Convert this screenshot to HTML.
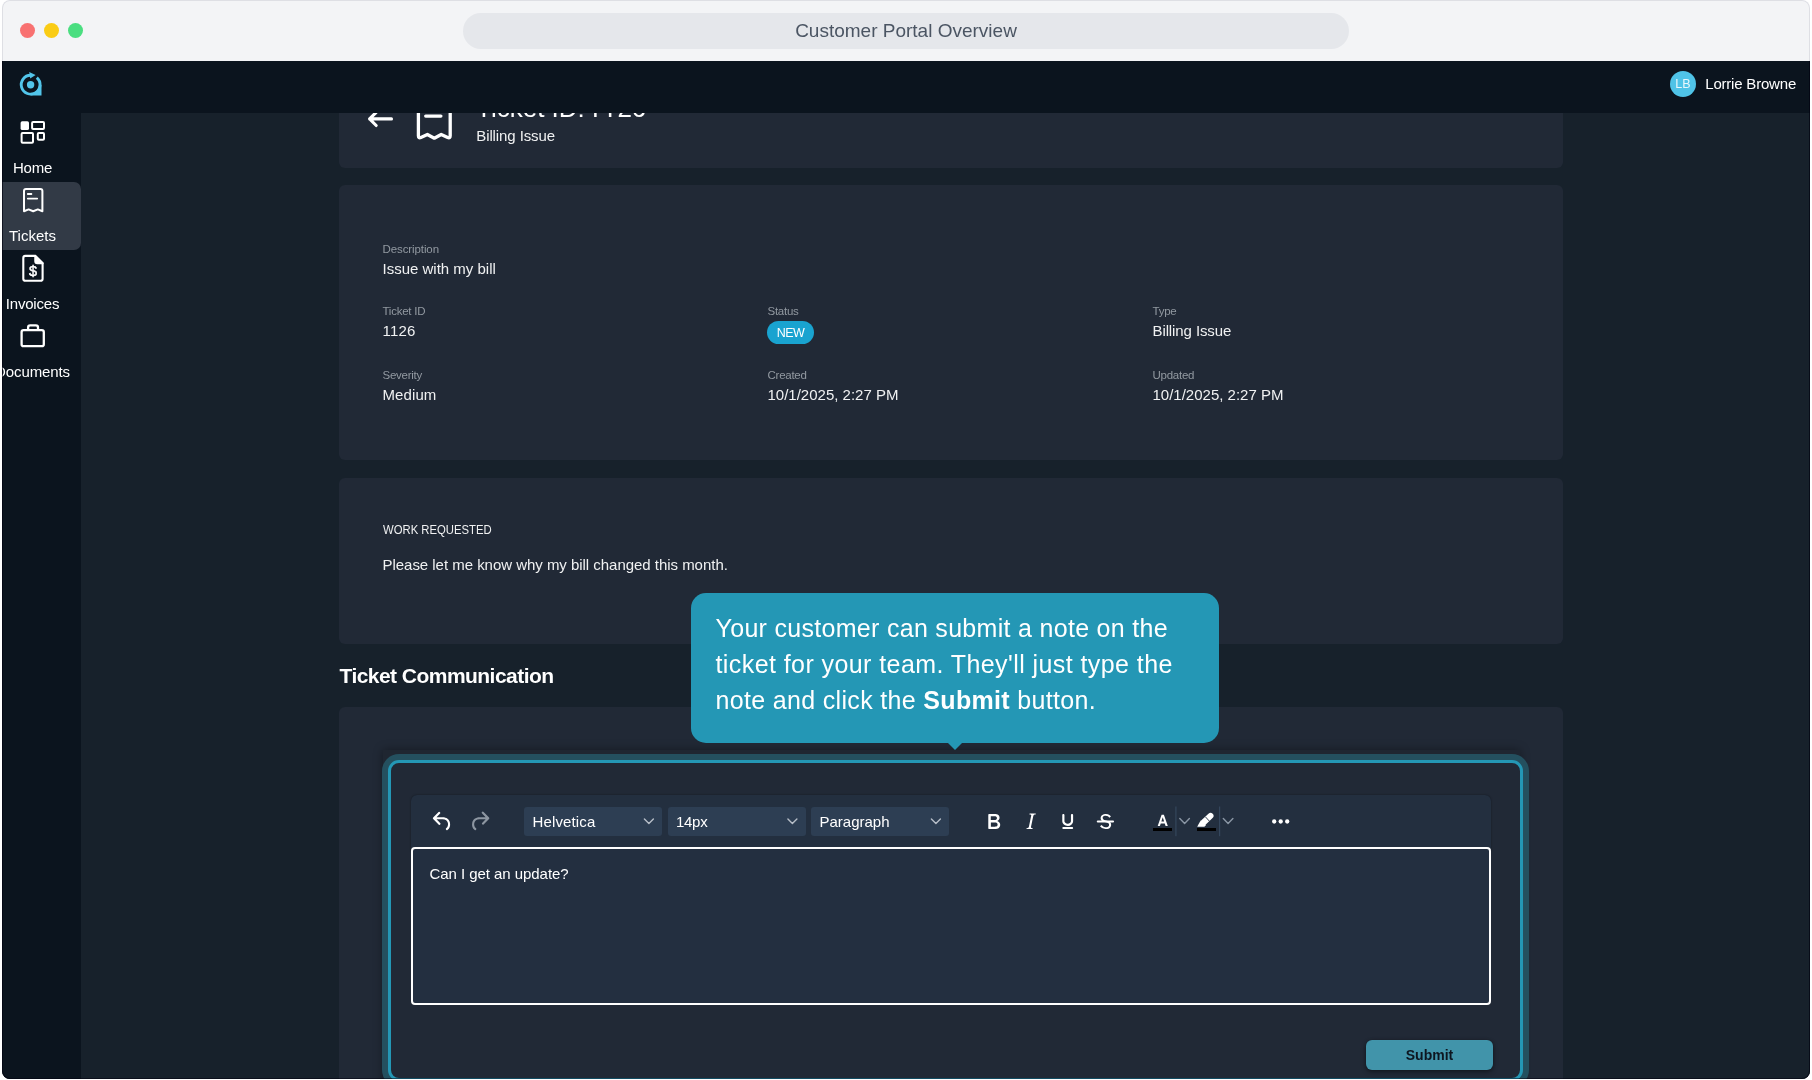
<!DOCTYPE html>
<html>
<head>
<meta charset="utf-8">
<title>Customer Portal Overview</title>
<style>
*{box-sizing:border-box;margin:0;padding:0}
html,body{width:1812px;height:1080px;overflow:hidden;background:#fff;font-family:"Liberation Sans",sans-serif;}
.abs{position:absolute}
.t{position:absolute;white-space:nowrap;line-height:1}
#win{position:absolute;left:1.5px;top:0;width:1808.7px;height:1078.7px;border-radius:8px;overflow:hidden;background:linear-gradient(#f3f4f6 0,#f3f4f6 60px,#0b141e 60px,#0b141e 100%)}
#win:before,#win:after{content:"";position:absolute;left:0;top:0;right:0;bottom:0;border-radius:8px;z-index:20;pointer-events:none}
#win:before{box-shadow:inset 0 0 0 1px rgba(10,10,50,.09)}
#win:after{box-shadow:inset 0 0 0 1px rgba(0,0,12,.6);clip-path:inset(61px 0 0 0)}
#pg{position:absolute;left:-1.5px;top:0;width:1812px;height:1080px;will-change:transform}
#titlebar{position:absolute;left:0;top:0;width:1812px;height:61px;background:#f3f4f6}
.dot{position:absolute;top:23px;width:15px;height:15px;border-radius:50%}
#pill{position:absolute;left:463px;top:13px;width:886px;height:36px;border-radius:18px;background:#e5e7eb}
#main{position:absolute;left:81px;top:113px;width:1731px;height:967px;background:#17212b}
#apphead{position:absolute;left:0;top:61px;width:1812px;height:52.4px;background:#0b141e}
#side{position:absolute;left:0;top:113px;width:81px;height:967px;background:#0b141e}
.card{position:absolute;left:339px;width:1224px;background:#212936;border-radius:6px}
.lbl{color:#9299a1;font-size:11.5px;letter-spacing:-.25px}
.val{color:#f0f1f2;font-size:15px}
.navt{color:#fff;font-size:15px;text-align:center;width:120px;left:-27.5px}
svg{position:absolute;overflow:visible}
</style>
</head>
<body>
<div id="win"><div id="pg">
  <div id="main"></div>

  <!-- card 1 (clipped by header) -->
  <div class="card" style="top:70px;height:97.5px"></div>
  <div class="t" style="left:476px;top:95.2px;font-size:26px;color:#fff">Ticket ID:</div>
  <div class="t" style="left:591.7px;top:95.2px;font-size:26px;color:#fff">I</div>
  <div class="t" style="left:606.4px;top:95.2px;font-size:26px;color:#fff">I</div>
  <div class="t" style="left:617.6px;top:95.2px;font-size:26px;color:#fff;letter-spacing:-.6px">26</div>
  <div class="t val" style="left:476.25px;top:128px;letter-spacing:-0.1px">Billing Issue</div>


  <svg style="left:0;top:0" width="1812" height="200" viewBox="0 0 1812 200" fill="none" stroke="#fff" stroke-linecap="round" stroke-linejoin="round">
    <path d="M391.500 118.900 H369.600 M376.200 112.300 L369.600 118.900 L376.200 125.500" stroke-width="3.100"/>
    <path d="M418.400 100 V135.800 Q418.400 138.600 420.900 137.500 L427.400 134.500 L434.300 138.200 L441.200 134.500 L447.700 137.500 Q450.200 138.600 450.200 135.800 V100" stroke-width="3.300"/>
    <path d="M425.700 116.100 H440.900" stroke-width="3.300"/>
  </svg>
  <!-- card 2 -->
  <div class="card" style="top:185px;height:275px"></div>
  <div class="t lbl" style="left:382.5px;top:243.5px;letter-spacing:-.1px">Description</div>
  <div class="t val" style="left:382.5px;top:261px">Issue with my bill</div>
  <div class="t lbl" style="left:382.5px;top:305.5px">Ticket ID</div>
  <div class="t val" style="left:382.5px;top:323px;letter-spacing:.2px">1126</div>
  <div class="t lbl" style="left:382.5px;top:369.5px">Severity</div>
  <div class="t val" style="left:382.5px;top:387px;letter-spacing:.1px">Medium</div>

  <div class="t lbl" style="left:767.5px;top:305.5px">Status</div>
  <div class="abs" style="left:767px;top:321px;width:47px;height:23px;border-radius:12px;background:#19a3d0"></div>
  <div class="t" style="left:767px;width:47px;text-align:center;top:326.6px;font-size:12.5px;letter-spacing:-.6px;color:#fff">NEW</div>
  <div class="t lbl" style="left:767.5px;top:369.5px">Created</div>
  <div class="t val" style="left:767.5px;top:387px">10/1/2025, 2:27 PM</div>

  <div class="t lbl" style="left:1152.5px;top:305.5px">Type</div>
  <div class="t val" style="left:1152.5px;top:323px;letter-spacing:-.1px">Billing Issue</div>
  <div class="t lbl" style="left:1152.5px;top:369.5px">Updated</div>
  <div class="t val" style="left:1152.5px;top:387px">10/1/2025, 2:27 PM</div>

  <!-- card 3 -->
  <div class="card" style="top:477.5px;height:166px"></div>
  <div class="t" style="left:382.5px;top:522.5px;font-size:13px;color:#f0f1f2;transform:scaleX(.87);transform-origin:0 0">WORK REQUESTED</div>
  <div class="t val" style="left:382.5px;top:557px;letter-spacing:-.03px">Please let me know why my bill changed this month.</div>

  <div class="t" style="left:339.5px;top:664.5px;font-size:21px;font-weight:700;letter-spacing:-.54px;color:#fff">Ticket Communication</div>

  <!-- card 4 -->
  <div class="card" style="top:707px;height:400px"></div>
  <!-- highlight -->
  <div class="abs" style="left:383px;top:750px;width:1137px;height:340px;background:#1f2631;box-shadow:0 0 9px rgba(0,0,0,.38)"></div>
  <div class="abs" style="left:388px;top:760px;width:1134.5px;height:321px;border:3px solid #2497b5;border-radius:11px;box-shadow:0 0 0 6px #24505f;background:#212936"></div>

  <!-- editor -->
  <div class="abs" style="left:411px;top:795px;width:1080px;height:56px;background:#232f3f;border-radius:6px 6px 0 0;box-shadow:0 0 2px rgba(0,0,0,.45)"></div>
  <div class="abs" style="left:411px;top:847px;width:1080px;height:158px;background:#232f40;border:2px solid #fff;border-radius:4px"></div>
  <div class="t" style="left:429.5px;top:866px;font-size:15px;color:#fff;letter-spacing:-.05px">Can I get an update?</div>

  <div class="abs sel" style="left:524px;top:807px;width:138px;height:29px;background:#2d3e53;border-radius:3px"></div>
  <div class="abs sel" style="left:667.5px;top:807px;width:138px;height:29px;background:#2d3e53;border-radius:3px"></div>
  <div class="abs sel" style="left:811px;top:807px;width:138px;height:29px;background:#2d3e53;border-radius:3px"></div>
  <div class="t" style="left:532.5px;top:814px;font-size:15px;color:#fff;letter-spacing:.14px">Helvetica</div>
  <div class="t" style="left:676px;top:814px;font-size:15px;color:#fff;letter-spacing:-.28px">14px</div>
  <div class="t" style="left:819.5px;top:814px;font-size:15px;color:#fff">Paragraph</div>


  <!-- toolbar icons -->
  <svg style="left:0;top:790px" width="1812" height="70" viewBox="0 790 1812 70" fill="none">
    <!-- undo / redo -->
    <g transform="translate(429.6 808.5) scale(1.083)" fill="#fff"><path d="M6.4 8H12c3.700 0 6.200 2 6.800 5.100.6 2.700-.4 5.600-2.300 6.800a1 1 0 0 1-1-1.800c1.100-.6 1.800-2.700 1.400-4.600-.5-2.100-2.100-3.500-4.900-3.500H6.400l3.300 3.300a1 1 0 1 1-1.400 1.400l-5-5a1 1 0 0 1 0-1.400l5-5a1 1 0 0 1 1.400 1.400L6.400 8z"/></g>
    <g transform="translate(466.6 808.5) scale(1.083)" fill="#8d96a1"><path d="M17.600 10H12c-2.800 0-4.400 1.400-4.900 3.500-.4 2 .3 4 1.400 4.600a1 1 0 1 1-1 1.800c-2-1.200-2.900-4.100-2.300-6.800.6-3 3-5.100 6.800-5.100h5.600l-3.300-3.300a1 1 0 1 1 1.400-1.400l5 5a1 1 0 0 1 0 1.400l-5 5a1 1 0 0 1-1.400-1.400l3.300-3.300z"/></g>
    <!-- select chevrons -->
    <g stroke="#b6bdc7" stroke-width="1.4" stroke-linecap="round" stroke-linejoin="round">
      <path d="M644.400 819 L648.900 823.500 L653.400 819"/>
      <path d="M787.900 819 L792.400 823.500 L796.900 819"/>
      <path d="M931.400 819 L935.900 823.500 L940.400 819"/>
    </g>
    <!-- B I U S -->
    <g transform="translate(980.700 808.500) scale(1.083)" fill="#fff"><path d="M7.800 19c-.3 0-.5 0-.6-.2l-.2-.5V5.700c0-.2 0-.4.200-.5l.6-.2h5c1.500 0 2.700.3 3.500 1 .7.600 1.100 1.400 1.100 2.500a3 3 0 0 1-.6 1.900c-.4.6-1 1-1.600 1.200.4.100.900.3 1.300.600s.800.700 1 1.200c.4.400.5 1 .5 1.600 0 1.300-.4 2.300-1.300 3-.800.700-2.100 1-3.800 1H7.800zm5-8.300c.6 0 1.200-.1 1.600-.5.400-.3.600-.7.600-1.300 0-1.100-.800-1.700-2.300-1.700H9.300v3.500h3.400zm.5 6c.7 0 1.300-.1 1.700-.4.400-.4.600-.9.600-1.500s-.2-1-.7-1.400c-.4-.3-1-.4-2-.4H9.400v3.800h4z"/></g>
    <g transform="translate(1017.700 808.500) scale(1.083)" fill="#fff"><path d="M16.700 4.700l-.1.900h-.3c-.6 0-1 0-1.400.3-.3.300-.4.600-.5 1.100l-2.100 9.800v.6c0 .5.400.8 1.400.8h.2l-.2.800H8l.2-.8h.2c1.100 0 1.800-.5 2-1.500l2-9.800.1-.5c0-.6-.4-.8-1.400-.8h-.3l.2-.9h5.800z"/></g>
    <g transform="translate(1054.700 808.500) scale(1.083)" fill="#fff"><path d="M16 5c.6 0 1 .4 1 1v5.500a4 4 0 0 1-.4 1.800l-1 1.400a5.300 5.300 0 0 1-5.500 1 5 5 0 0 1-1.600-1c-.5-.4-.8-.9-1.100-1.400a4 4 0 0 1-.4-1.800V6c0-.6.400-1 1-1s1 .4 1 1v5.500c0 .3 0 .6.200 1l.6.700a3.300 3.300 0 0 0 2.200.8 3.400 3.400 0 0 0 2.200-.8c.3-.2.400-.5.600-.8l.2-.9V6c0-.6.400-1 1-1zM8 17h8c.6 0 1 .4 1 1s-.4 1-1 1H8a1 1 0 0 1 0-2z"/></g>
    <g transform="translate(1092.400 808.500) scale(1.083)" fill="#fff"><path d="M15.600 8.500c-.5-.7-1-1.100-1.300-1.300-.6-.4-1.300-.6-2-.6-2.700 0-2.800 1.700-2.800 2.100 0 1.600 1.800 2 3.200 2.300 4.400.9 4.600 2.800 4.600 3.900 0 1.400-.7 4.100-5 4.100A6.200 6.200 0 0 1 7 16.400l1.500-1.100c.4.600 1.600 2 3.700 2 1.600 0 2.500-.4 3-1.200.4-.8.300-2-.8-2.600-.7-.4-1.600-.7-2.900-1-1-.2-3.900-.8-3.900-3.600C7.600 6 10.300 5 12.400 5c2.900 0 4.200 1.600 4.700 2.400l-1.500 1.100z"/><path d="M5 11h14a1 1 0 0 1 0 2H5a1 1 0 0 1 0-2z"/></g>
    <!-- text color -->
    <path transform="translate(1157.700 814.800)" fill="#fff" fill-rule="evenodd" d="M0 11.200 L3.900 0 L6.200 0 L10.100 11.200 L7.900 11.200 L7.050 8.600 L3.050 8.600 L2.200 11.200Z M3.650 6.800 L6.450 6.800 L5.050 2.400Z"/>
    <rect x="1153" y="828" width="19" height="3" fill="#000"/>
    <rect x="1175.300" y="806.500" width="1.200" height="29.700" fill="#34465c"/>
    <path d="M1179.800 818.600 L1184.600 823.600 L1189.400 818.600" stroke="#8a96a4" stroke-width="1.400" stroke-linecap="round" stroke-linejoin="round"/>
    <!-- highlighter -->
    <path d="M1197.200 826.800 L1200.200 821.200 L1205.600 825.500 L1204.400 826.800Z" fill="#fff"/>
    <path d="M1203.200 822.800 L1210.500 815.900" stroke="#fff" stroke-width="6" stroke-linecap="round"/>
    <path d="M1200.600 821.100 L1205.800 825.300" stroke="#fff" stroke-width="1"/>
    <path d="M1205.300 816.700 L1209.700 821.500" stroke="#232f3f" stroke-width=".9"/>
    <rect x="1197" y="828" width="19" height="3" fill="#000"/>
    <rect x="1219" y="806.500" width="1.200" height="29.700" fill="#34465c"/>
    <path d="M1223.300 818.600 L1228.100 823.600 L1232.900 818.600" stroke="#8a96a4" stroke-width="1.400" stroke-linecap="round" stroke-linejoin="round"/>
    <!-- more -->
    <g fill="#fff"><circle cx="1274.200" cy="821.500" r="2.150"/><circle cx="1280.700" cy="821.500" r="2.150"/><circle cx="1287.200" cy="821.500" r="2.150"/></g>
  </svg>
  <!-- submit -->
  <div class="abs" style="left:1366px;top:1040.2px;width:127px;height:29.6px;background:#4194aa;border-radius:6px;box-shadow:0 2px 5px rgba(0,0,0,.4),0 0 3px rgba(0,0,0,.2)"></div>
  <div class="t" style="left:1366px;width:127px;text-align:center;top:1048px;font-size:14px;font-weight:700;color:#0d1620">Submit</div>

  <!-- tooltip -->
  <div class="abs" style="left:691px;top:593.2px;width:528px;height:149.8px;background:#2497b5;border-radius:15px"></div>
  <div class="abs" style="left:947px;top:742px;width:0;height:0;border-left:8px solid transparent;border-right:8px solid transparent;border-top:8px solid #2497b5"></div>
  <div class="t tip" style="left:715.5px;top:616px;font-size:25px;letter-spacing:.3px;color:#fff">Your customer can submit a note on the</div>
  <div class="t tip" style="left:715.5px;top:652px;font-size:25px;letter-spacing:.42px;color:#fff">ticket for your team. They'll just type the</div>
  <div class="t tip" style="left:715.5px;top:688px;font-size:25px;letter-spacing:.33px;color:#fff">note and click the <b>Submit</b> button.</div>

  <!-- app header + sidebar on top -->
  <div id="apphead">
    <div class="abs" style="left:1670px;top:10px;width:26px;height:26px;border-radius:50%;background:#4fc3e7"></div>
    <div class="t" style="left:1670px;width:26px;text-align:center;top:16.5px;font-size:12.5px;color:#e9f7fc">LB</div>
    <div class="t" style="left:1705.25px;top:15px;font-size:15px;color:#fff;letter-spacing:-.2px">Lorrie Browne</div>
  </div>
  <div id="side">
    <div class="abs" style="left:0;top:69px;width:81px;height:68px;background:#323a46;border-radius:0 7px 7px 0"></div>

    <!-- sidebar icons (page coords via svg offset) -->
    <svg style="left:0;top:-52px" width="81" height="450" viewBox="0 61 81 450" fill="none">
      <!-- logo -->
      <g fill="#52c5ea" stroke="none">
        <path d="M30.6 95.6 H41.5 V84.7 H39 A8.4 8.4 0 0 1 30.6 93.1Z"/>
        <circle cx="30.6" cy="84.7" r="3.7"/>
        <path d="M29.2 71.9 L35.6 75 L30.2 78.6Z"/>
      </g>
      <path d="M36.800 77.600 A9.400 9.400 0 1 1 30.600 75.300" stroke="#52c5ea" stroke-width="2.900"/>
      <!-- home -->
      <rect x="20.6" y="121.3" width="8.4" height="8.7" rx="1.6" fill="#fff"/>
      <g stroke="#fff" stroke-width="2">
        <rect x="32.1" y="122.1" width="11.9" height="6.9" rx="1"/>
        <rect x="21.6" y="133.1" width="11.4" height="9.7" rx="1"/>
        <rect x="37.8" y="133.1" width="6.2" height="6.6" rx="1"/>
      </g>
      <!-- tickets -->
      <g stroke="#fff" stroke-width="2" stroke-linejoin="round" stroke-linecap="round">
        <path d="M24 211.2 V191 Q24 189 26 189 H40.4 Q42.4 189 42.4 191 V211.2 L37.8 209.4 L33.2 211.2 L28.6 209.4Z"/>
        <path d="M27.8 194 H31.4 M27.8 198.6 H37.2" stroke-width="1.8"/>
      </g>
      <!-- invoices -->
      <g stroke="#fff" stroke-width="2.1" stroke-linejoin="round">
        <path d="M35.3 255.9 H25.4 Q23.3 255.9 23.3 258 V278.7 Q23.3 280.8 25.4 280.8 H40.5 Q42.6 280.8 42.6 278.7 V263.2 Z"/>
        <path d="M35.3 255.9 V261.2 Q35.3 263.2 37.3 263.2 H42.6Z" fill="#fff"/>
      </g>
      <text x="33" y="275.6" text-anchor="middle" font-family="Liberation Sans, sans-serif" font-size="14.5" font-weight="400" fill="#fff" stroke="#fff" stroke-width=".45">$</text>
      <!-- documents -->
      <g stroke="#fff" stroke-width="2.3" stroke-linejoin="round">
        <rect x="21.6" y="330.1" width="22.2" height="16.1" rx="2"/>
        <path d="M28.1 330 V327.4 Q28.1 325.3 30.2 325.3 H35.9 Q38 325.3 38 327.4 V330"/>
      </g>
    </svg>
    <div class="t navt" style="top:46.500px;letter-spacing:-.2px">Home</div>
    <div class="t navt" style="top:115px">Tickets</div>
    <div class="t navt" style="top:183px;letter-spacing:-.2px">Invoices</div>
    <div class="t navt" style="top:251px;letter-spacing:-.1px">Documents</div>
  </div>
  <div id="titlebar">
    <div class="dot" style="left:20px;background:#f87171"></div>
    <div class="dot" style="left:44px;background:#facc15"></div>
    <div class="dot" style="left:68px;background:#4ade80"></div>
    <div id="pill"></div>
    <div class="t" id="ttl" style="left:463px;width:886px;text-align:center;top:21px;font-size:19px;color:#4b5563;">Customer Portal Overview</div>
  </div>
</div></div>
</body>
</html>
